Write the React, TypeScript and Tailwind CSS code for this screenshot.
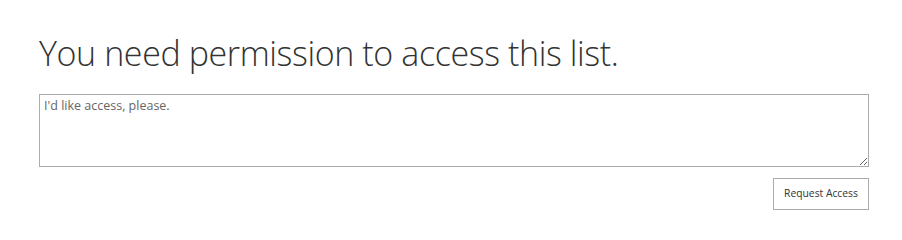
export default function App() {
  return (
    <div className="w-[902px] h-[234px] bg-white font-['Open_Sans',sans-serif]">
      <div className="pl-[39px] pt-[32px]">
        <h1 className="text-[34px] leading-[42px] font-light text-[#333333] tracking-[-0.4px]">
          You need permission to access this list.
        </h1>
        <textarea
          className="mt-[20px] block w-[830px] h-[73px] border border-[#ababab] px-[4px] py-[2px] text-[12.5px] text-[#333333] placeholder:text-[#666666] outline-none resize-y"
          placeholder="I'd like access, please."
        />
        <div className="flex justify-end w-[830px] mt-[11px]">
          <button className="h-[32px] w-[96px] border border-[#ababab] bg-white text-[10.3px] text-[#333333]">
            Request Access
          </button>
        </div>
      </div>
    </div>
  );
}
